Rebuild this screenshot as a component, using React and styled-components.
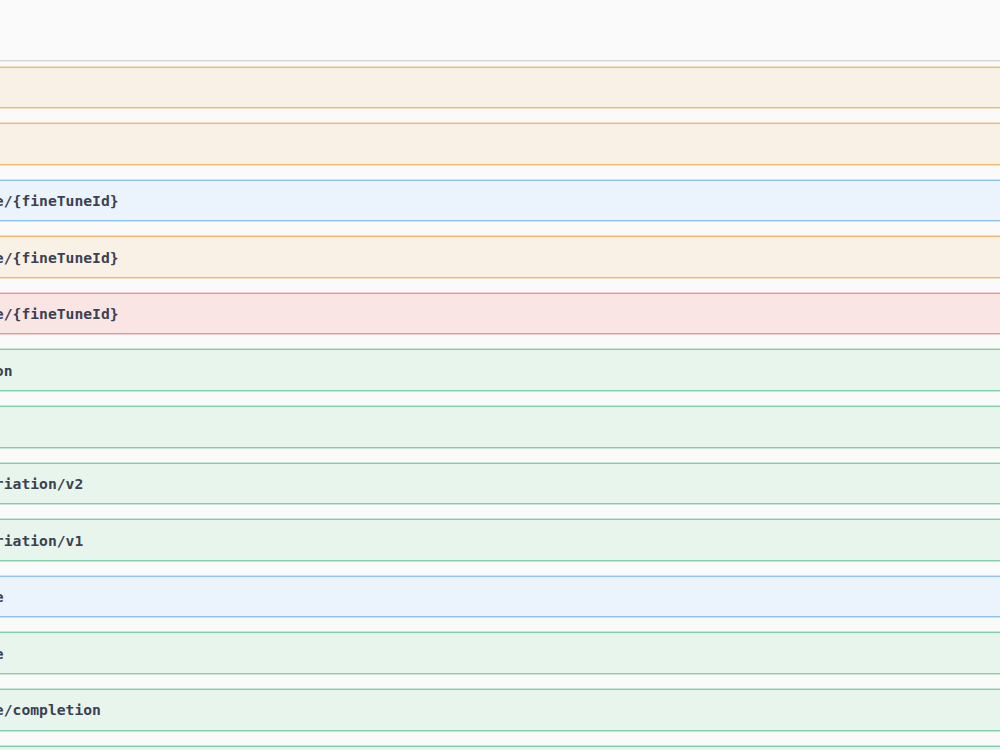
import React from "react";
import styled, { createGlobalStyle } from "styled-components";

const GlobalStyle = createGlobalStyle`
  html, body {
    margin: 0;
    padding: 0;
    background: #fafafa;
    overflow: hidden;
  }
  body {
    font-family: "Open Sans", "Liberation Sans", sans-serif;
  }
`;

const METHOD = {
  get: { bg: "#ebf3fc", border: "#8fc2f2", glow: "rgba(143,194,242,.55)", badge: "#61affe" },
  put: { bg: "#faf1e6", border: "#f2b86a", glow: "rgba(242,184,106,.55)", badge: "#fca130" },
  post: { bg: "#e7f5ed", border: "#7fd0aa", glow: "rgba(127,208,170,.55)", badge: "#49cc90" },
  delete: { bg: "#f9e5e4", border: "#ea9492", glow: "rgba(234,148,146,.55)", badge: "#f93e3e" },
};

const Page = styled.div`
  margin-left: -278px;
  margin-right: -120px;
`;

const TagHeader = styled.div`
  height: 60px;
  border-bottom: 1px solid #d6d6d8;
  box-shadow: 0 1px 0 #ececed;
  margin-bottom: 5.6px;
`;

const OpList = styled.div`
  display: flex;
  flex-direction: column;
  gap: 15px;
`;

const Opblock = styled.div`
  box-sizing: border-box;
  height: 41.58px;
  border: 1px solid ${(p) => METHOD[p.$method].border};
  background: ${(p) => METHOD[p.$method].bg};
  border-radius: 4px;
  box-shadow: 0 0 0 0.8px ${(p) => METHOD[p.$method].glow};
`;

const Summary = styled.div`
  display: flex;
  align-items: center;
  height: 100%;
  padding: 0 5px;
`;

const Method = styled.span`
  min-width: 80px;
  padding: 6px 0;
  border-radius: 3px;
  text-align: center;
  color: #fff;
  font: 700 14px "Open Sans", sans-serif;
  background: ${(p) => METHOD[p.$method].badge};
`;

const Path = styled.span`
  padding: 0 10px;
  font-family: "DejaVu Sans Mono", "Liberation Mono", monospace;
  font-weight: 700;
  font-size: 14.7px;
  color: #3b4151;
  white-space: nowrap;
`;

const ops = [
  ["put", "/api/openai/config"],
  ["put", "/api/openai/model"],
  ["get", "/api/openai/fine-tune/{fineTuneId}"],
  ["put", "/api/openai/fine-tune/{fineTuneId}"],
  ["delete", "/api/openai/fine-tune/{fineTuneId}"],
  ["post", "/api/openai/completion"],
  ["post", "/api/openai/images"],
  ["post", "/api/openai/image/variation/v2"],
  ["post", "/api/openai/image/variation/v1"],
  ["get", "/api/openai/fine-tune"],
  ["post", "/api/openai/fine-tune"],
  ["post", "/api/openai/fine-tune/completion"],
  ["post", "/api/openai/embeddings"],
];

export default function App() {
  return (
    <>
      <GlobalStyle />
      <Page>
        <TagHeader />
        <OpList>
          {ops.map(([m, p], i) => (
            <Opblock key={i} $method={m}>
              <Summary>
                <Method $method={m}>{m.toUpperCase()}</Method>
                <Path>{p}</Path>
              </Summary>
            </Opblock>
          ))}
        </OpList>
      </Page>
    </>
  );
}
